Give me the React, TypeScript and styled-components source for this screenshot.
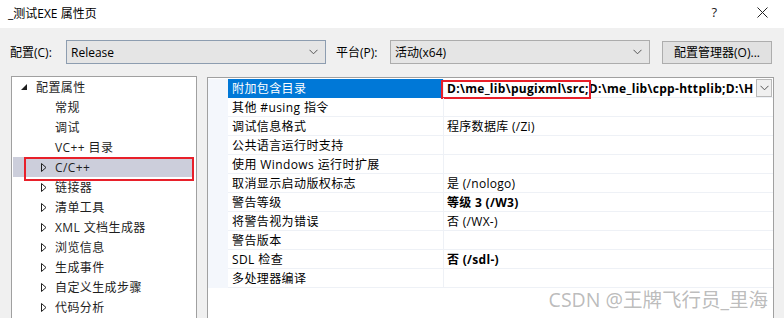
import React from 'react';
import styled, { createGlobalStyle, css } from 'styled-components';

const GlobalStyle = createGlobalStyle`
  html, body {
    margin: 0;
    padding: 0;
    background: #f0f0f0;
  }
  body {
    font-family: "Open Sans", "Noto Sans CJK SC", sans-serif;
    font-size: 12px;
    color: #000;
  }
`;

const treeItems: { label: string; level: number; expanded?: boolean; leaf?: boolean; selected?: boolean }[] = [
  { label: '配置属性', level: 0, expanded: true },
  { label: '常规', level: 1, leaf: true },
  { label: '调试', level: 1, leaf: true },
  { label: 'VC++ 目录', level: 1, leaf: true },
  { label: 'C/C++', level: 1, selected: true },
  { label: '链接器', level: 1 },
  { label: '清单工具', level: 1 },
  { label: 'XML 文档生成器', level: 1 },
  { label: '浏览信息', level: 1 },
  { label: '生成事件', level: 1 },
  { label: '自定义生成步骤', level: 1 },
  { label: '代码分析', level: 1 },
];

const props: { name: string; value: string; bold?: boolean; selected?: boolean }[] = [
  { name: '附加包含目录', value: 'D:\\me_lib\\pugixml\\src;D:\\me_lib\\cpp-httplib;D:\\H', bold: true, selected: true },
  { name: '其他 #using 指令', value: '' },
  { name: '调试信息格式', value: '程序数据库 (/Zi)' },
  { name: '公共语言运行时支持', value: '' },
  { name: '使用 Windows 运行时扩展', value: '' },
  { name: '取消显示启动版权标志', value: '是 (/nologo)' },
  { name: '警告等级', value: '等级 3 (/W3)', bold: true },
  { name: '将警告视为错误', value: '否 (/WX-)' },
  { name: '警告版本', value: '' },
  { name: 'SDL 检查', value: '否 (/sdl-)', bold: true },
  { name: '多处理器编译', value: '' },
];

const Chevron = () => (
  <svg width="9" height="6" viewBox="0 0 9 6">
    <path d="M0.5 0.8 L4.5 4.8 L8.5 0.8" fill="none" stroke="#555" strokeWidth="1" />
  </svg>
);

export default function App() {
  return (
    <>
      <GlobalStyle />
      <Window>
        <TitleBar>
          <Title>_测试EXE 属性页</Title>
          <TitleButtons>
            <HelpMark>?</HelpMark>
            <svg width="11" height="11" viewBox="0 0 11 11">
              <path d="M0.5 0.5 L10.5 10.5 M10.5 0.5 L0.5 10.5" stroke="#222" strokeWidth="1" />
            </svg>
          </TitleButtons>
        </TitleBar>

        <Toolbar>
          <FieldLabel $width={56}>配置(C):</FieldLabel>
          <Combo $focused>
            <span>Release</span>
            <Chevron />
          </Combo>
          <FieldLabel $width={54} $left={10}>平台(P):</FieldLabel>
          <Combo>
            <span>活动(x64)</span>
            <Chevron />
          </Combo>
          <ManagerButton>配置管理器(O)...</ManagerButton>
        </Toolbar>

        <Body>
          <TreePanel>
            {treeItems.map((item) => (
              <TreeRow key={item.label} $selected={item.selected}>
                <Twisty $level={item.level}>
                  {item.expanded ? (
                    <svg width="6" height="6" viewBox="0 0 6 6">
                      <path d="M6 0 L6 6 L0 6 Z" fill="#1e1e1e" />
                    </svg>
                  ) : item.leaf ? null : (
                    <svg width="6" height="9" viewBox="0 0 6 9">
                      <path d="M0.5 0.5 L5 4.5 L0.5 8.5 Z" fill="none" stroke="#1e1e1e" strokeWidth="1" />
                    </svg>
                  )}
                </Twisty>
                <TreeLabel>{item.label}</TreeLabel>
                {item.selected && <RedMark $tree />}
              </TreeRow>
            ))}
          </TreePanel>

          <GridPanel>
            {props.map((p) => (
              <GridRow key={p.name}>
                <Gutter />
                <NameCell $selected={p.selected}>{p.name}</NameCell>
                <ValueCell $bold={p.bold}>
                  <ValueText>{p.value}</ValueText>
                  {p.selected && (
                    <>
                      <RedMark />
                      <DropButton>
                        <Chevron />
                      </DropButton>
                    </>
                  )}
                </ValueCell>
              </GridRow>
            ))}
          </GridPanel>
        </Body>

        <Watermark>CSDN @王牌飞行员_里海</Watermark>
      </Window>
    </>
  );
}

const Window = styled.div`
  position: relative;
  width: 784px;
  height: 318px;
  overflow: hidden;
  background: #f0f0f0;
`;

const TitleBar = styled.div`
  display: flex;
  align-items: center;
  justify-content: space-between;
  height: 28px;
  padding: 0 16px 0 8px;
  background: #fff;
`;

const Title = styled.div`
  font-size: 12px;
  margin-top: -3px;
`;

const TitleButtons = styled.div`
  display: flex;
  align-items: center;
  gap: 40px;
  margin-top: -4px;
`;

const HelpMark = styled.span`
  font-size: 13px;
  color: #222;
`;

const Toolbar = styled.div`
  display: flex;
  align-items: center;
  height: 24px;
  margin-top: 12px;
  padding-left: 10px;
`;

const FieldLabel = styled.div<{ $width: number; $left?: number }>`
  width: ${({ $width }) => $width}px;
  margin-left: ${({ $left }) => $left ?? 0}px;
  white-space: nowrap;
`;

const Combo = styled.div<{ $focused?: boolean }>`
  box-sizing: border-box;
  display: flex;
  align-items: center;
  justify-content: space-between;
  width: 260px;
  height: 24px;
  padding: 0 7px 0 4px;
  background: #e5e5e5;
  border: 1px solid #acacac;
  ${({ $focused }) =>
    $focused &&
    css`
      border-color: #8d9db0;
    `}
`;

const ManagerButton = styled.div`
  box-sizing: border-box;
  display: flex;
  align-items: center;
  justify-content: center;
  width: 110px;
  height: 23px;
  margin-left: 12px;
  background: #e1e1e1;
  border: 1px solid #adadad;
  white-space: nowrap;
`;

const Body = styled.div`
  display: flex;
  align-items: flex-start;
  gap: 10px;
  margin-top: 12px;
  padding-left: 11px;
  letter-spacing: 0.4px;
`;

const TreePanel = styled.div`
  box-sizing: border-box;
  width: 186px;
  height: 260px;
  padding: 0 3px 0 1px;
  background: #fff;
  border: 1px solid #a0a0a0;
`;

const TreeRow = styled.div<{ $selected?: boolean }>`
  position: relative;
  display: flex;
  align-items: center;
  height: 20px;
  background: ${({ $selected }) => ($selected ? '#cccedb' : 'transparent')};
`;

const Twisty = styled.div<{ $level: number }>`
  display: flex;
  align-items: center;
  justify-content: flex-start;
  width: 14px;
  margin-left: ${({ $level }) => ($level === 0 ? 8 : 28)}px;
  ${({ $level }) =>
    $level === 0 &&
    css`
      width: 15px;
    `}
`;

const TreeLabel = styled.span`
  white-space: nowrap;
  color: #1e1e1e;
`;

const RedMark = styled.div<{ $tree?: boolean }>`
  position: absolute;
  box-sizing: border-box;
  border: 2px solid #e8202a;
  pointer-events: none;
  ${({ $tree }) =>
    $tree
      ? css`
          left: 11px;
          right: -1px;
          top: 0;
          bottom: -4px;
        `
      : css`
          left: -3px;
          top: 1px;
          width: 150px;
          height: 19px;
        `}
`;

const GridPanel = styled.div`
  box-sizing: border-box;
  width: 567px;
  height: 260px;
  margin-top: 1px;
  padding-top: 1px;
  background: #fff;
  border: 1px solid #a0a0a0;
`;

const GridRow = styled.div`
  display: grid;
  grid-template-columns: 20px 215px 1fr;
  height: 19px;
`;

const Gutter = styled.div`
  background: #f4f7fc;
`;

const NameCell = styled.div<{ $selected?: boolean }>`
  display: flex;
  align-items: center;
  padding-left: 4px;
  white-space: nowrap;
  border-bottom: 1px solid #eef1f6;
  ${({ $selected }) =>
    $selected &&
    css`
      background: #0078d7;
      color: #fff;
      border-bottom-color: #0078d7;
    `}
`;

const ValueCell = styled.div<{ $bold?: boolean }>`
  position: relative;
  display: flex;
  align-items: center;
  min-width: 0;
  padding-left: 3px;
  border-left: 1px solid #eef1f6;
  border-bottom: 1px solid #eef1f6;
  font-weight: ${({ $bold }) => ($bold ? 700 : 400)};
`;

const ValueText = styled.span`
  flex: 1;
  min-width: 0;
  overflow: hidden;
  white-space: nowrap;
  letter-spacing: 0.3px;
`;

const DropButton = styled.div`
  box-sizing: border-box;
  display: flex;
  align-items: center;
  justify-content: center;
  flex: none;
  width: 16px;
  height: 18px;
  margin-right: 1px;
  background: #f0f0f0;
  border: 1px solid #b9b9b9;
`;

const Watermark = styled.div`
  position: absolute;
  right: 16px;
  bottom: 5px;
  font-size: 19.5px;
  color: rgba(150, 150, 150, 0.65);
  white-space: nowrap;
`;
